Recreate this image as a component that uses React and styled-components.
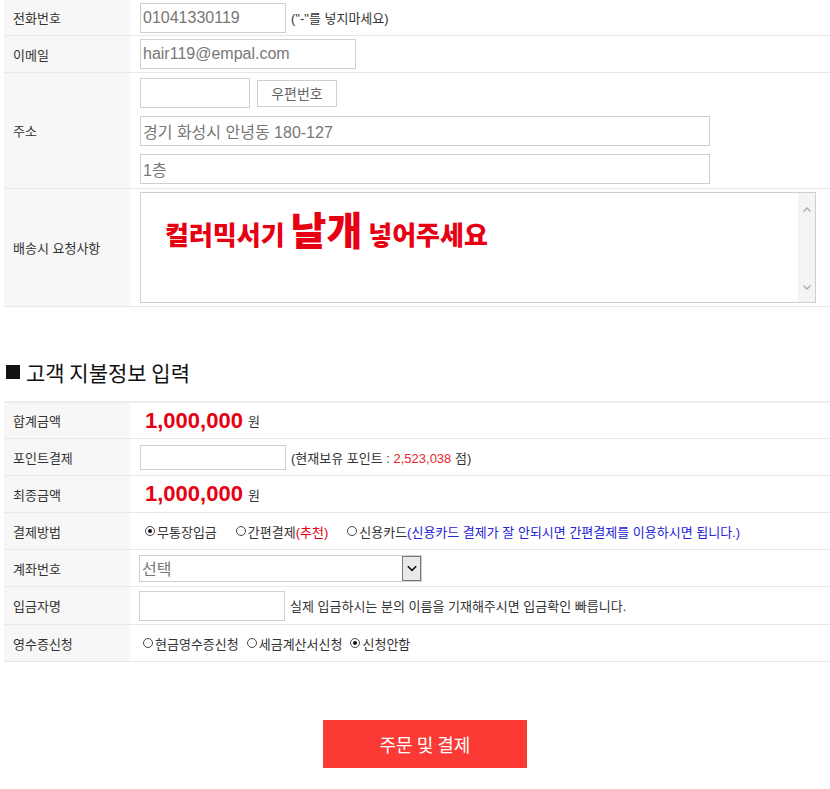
import styled, { createGlobalStyle } from "styled-components";

const GlobalStyle = createGlobalStyle`
  body {
    margin: 0;
    background: #fff;
    color: #333;
    font-family: "Liberation Sans", "Noto Sans CJK KR", sans-serif;
  }
`;

const Page = styled.div`
  width: 830px;
  padding-left: 4px;
  box-sizing: border-box;
`;

const Table = styled.div`
  border-top: ${(p) => (p.$top ? "2px solid #eeeeee" : "none")};
`;

const Row = styled.div`
  display: grid;
  grid-template-columns: 126px 1fr;
  min-height: ${(p) => p.$h || 36}px;
  border-bottom: 1px solid #e8e8e8;
`;

const Label = styled.div`
  display: flex;
  align-items: center;
  padding-left: 9px;
  background: #f7f7f7;
  font-size: 13px;
  color: #333;
`;

const Cell = styled.div`
  display: flex;
  align-items: center;
  gap: ${(p) => p.$gap ?? 5}px;
  padding-left: ${(p) => p.$pl ?? 10}px;
  font-size: 13px;
`;

const Stack = styled.div`
  display: flex;
  flex-direction: column;
  gap: 8px;
  padding: 5px 0 4px 10px;
`;

const Line = styled.div`
  display: flex;
  align-items: center;
  gap: 7px;
`;

const Input = styled.div`
  box-sizing: border-box;
  width: ${(p) => p.$w}px;
  height: ${(p) => p.$h || 30}px;
  border: 1px solid #cfcfcf;
  padding-left: 2px;
  display: flex;
  align-items: center;
  font-size: 16px;
  color: #777;
  background: #fff;
`;

const ZipButton = styled.div`
  box-sizing: border-box;
  width: 80px;
  height: 27px;
  border: 1px solid #cfcfcf;
  display: flex;
  align-items: center;
  justify-content: center;
  font-size: 14px;
  color: #666;
  background: #fff;
`;

const Note = styled.span`
  font-size: 13px;
  color: ${(p) => p.$color || "#333"};
`;

const TextArea = styled.div`
  box-sizing: border-box;
  margin: 3px 0 3px 10px;
  width: 676px;
  height: 111px;
  border: 1px solid #cfcfcf;
  display: flex;
`;

const Request = styled.div`
  flex: 1;
  padding: 12px 0 0 24px;
  color: #e60012;
  font-weight: 900;
  font-size: 26px;
  line-height: 46px;
  font-family: "Noto Sans CJK KR", sans-serif;
`;

const Big = styled.span`
  font-size: 39px;
`;

const ScrollBar = styled.div`
  width: 17px;
  background: #f4f4f4;
  display: flex;
  flex-direction: column;
  justify-content: space-between;
  align-items: center;
  padding: 12px 0 10px;
`;

const Heading = styled.h2`
  margin: 50px 0 14px 2px;
  font-size: 21px;
  font-weight: 400;
  line-height: 30px;
  color: #111;
  font-family: "Noto Sans CJK KR", sans-serif;
  display: flex;
  align-items: center;
  gap: 6px;
`;

const Square = styled.span`
  width: 14px;
  height: 14px;
  background: #111;
`;

const Amount = styled.span`
  font-size: 22px;
  font-weight: 700;
  color: #e60012;
`;

const Options = styled.div`
  display: flex;
  align-items: center;
  gap: ${(p) => p.$gap}px;
`;

const Option = styled.label`
  display: flex;
  align-items: center;
  gap: 2px;
  font-size: 13px;
  color: #333;
`;

const Radio = styled.span`
  box-sizing: border-box;
  width: 10px;
  height: 10px;
  border-radius: 50%;
  border: 1px solid #444;
  display: flex;
  align-items: center;
  justify-content: center;
  &::after {
    content: "";
    width: 4px;
    height: 4px;
    border-radius: 50%;
    background: ${(p) => (p.$checked ? "#111" : "transparent")};
  }
`;

const Select = styled.div`
  box-sizing: border-box;
  width: 283px;
  height: 27px;
  border: 1px solid #cfcfcf;
  display: flex;
  align-items: stretch;
  font-size: 16px;
  color: #777;
`;

const SelectText = styled.span`
  flex: 1;
  display: flex;
  align-items: center;
  padding-left: 2px;
`;

const Arrow = styled.span`
  width: 17px;
  border: 1px solid #777;
  background: #e9e9e9;
  display: flex;
  align-items: center;
  justify-content: center;
`;

const Footer = styled.div`
  display: flex;
  justify-content: center;
  padding: 58px 0 21px 16px;
`;

const SubmitButton = styled.button`
  width: 204px;
  height: 48px;
  border: none;
  background: #fb3a35;
  color: #fff;
  font-size: 18px;
  font-family: "Noto Sans CJK KR", sans-serif;
  cursor: pointer;
`;

const Chevron = ({ up, color = "#aaa", size = 10 }) => (
  <svg width={size} height={size} viewBox="0 0 10 10">
    <path
      d={up ? "M1.5 6.5 L5 3 L8.5 6.5" : "M1.5 3.5 L5 7 L8.5 3.5"}
      fill="none"
      stroke={color}
      strokeWidth="1.3"
    />
  </svg>
);

function App() {
  return (
    <Page>
      <GlobalStyle />
      <Table>
        <Row $h={35}>
          <Label>전화번호</Label>
          <Cell>
            <Input $w={146}>01041330119</Input>
            <Note>("-"를 넣지마세요)</Note>
          </Cell>
        </Row>
        <Row $h={36}>
          <Label>이메일</Label>
          <Cell>
            <Input $w={216}>hair119@empal.com</Input>
          </Cell>
        </Row>
        <Row $h={115}>
          <Label>주소</Label>
          <Stack>
            <Line>
              <Input $w={110} />
              <ZipButton>우편번호</ZipButton>
            </Line>
            <Input $w={570}>경기 화성시 안녕동 180-127</Input>
            <Input $w={570}>1층</Input>
          </Stack>
        </Row>
        <Row $h={117}>
          <Label>배송시 요청사항</Label>
          <TextArea>
            <Request>
              컬러믹서기 <Big>날개</Big> 넣어주세요
            </Request>
            <ScrollBar>
              <Chevron up />
              <Chevron />
            </ScrollBar>
          </TextArea>
        </Row>
      </Table>

      <Heading>
        <Square />
        고객 지불정보 입력
      </Heading>

      <Table $top>
        <Row $h={35}>
          <Label>합계금액</Label>
          <Cell $pl={15} $gap={5}>
            <Amount>1,000,000</Amount>
            <Note>원</Note>
          </Cell>
        </Row>
        <Row>
          <Label>포인트결제</Label>
          <Cell>
            <Input $w={146} $h={25} />
            <Note>
              (현재보유 포인트 : <Note $color="#e8262d">2,523,038</Note> 점)
            </Note>
          </Cell>
        </Row>
        <Row>
          <Label>최종금액</Label>
          <Cell $pl={15} $gap={5}>
            <Amount>1,000,000</Amount>
            <Note>원</Note>
          </Cell>
        </Row>
        <Row>
          <Label>결제방법</Label>
          <Cell $pl={15}>
            <Options $gap={19}>
              <Option>
                <Radio $checked />
                <span>무통장입금</span>
              </Option>
              <Option>
                <Radio />
                <span>
                  간편결제<Note $color="#e60012">(추천)</Note>
                </span>
              </Option>
              <Option>
                <Radio />
                <span>
                  신용카드
                  <Note $color="#2424d6">
                    (신용카드 결제가 잘 안되시면 간편결제를 이용하시면 됩니다.)
                  </Note>
                </span>
              </Option>
            </Options>
          </Cell>
        </Row>
        <Row>
          <Label>계좌번호</Label>
          <Cell $pl={9}>
            <Select>
              <SelectText>선택</SelectText>
              <Arrow>
                <Chevron color="#111" size={12} />
              </Arrow>
            </Select>
          </Cell>
        </Row>
        <Row $h={37}>
          <Label>입금자명</Label>
          <Cell $pl={9}>
            <Input $w={146} />
            <Note>실제 입금하시는 분의 이름을 기재해주시면 입금확인 빠릅니다.</Note>
          </Cell>
        </Row>
        <Row>
          <Label>영수증신청</Label>
          <Cell $pl={13}>
            <Options $gap={8}>
              <Option>
                <Radio />
                <span>현금영수증신청</span>
              </Option>
              <Option>
                <Radio />
                <span>세금계산서신청</span>
              </Option>
              <Option>
                <Radio $checked />
                <span>신청안함</span>
              </Option>
            </Options>
          </Cell>
        </Row>
      </Table>

      <Footer>
        <SubmitButton>주문 및 결제</SubmitButton>
      </Footer>
    </Page>
  );
}

export default App;
